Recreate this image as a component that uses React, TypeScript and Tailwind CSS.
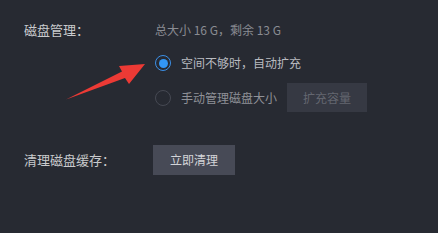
import React from "react";

function Radio({ checked }: { checked?: boolean }) {
  return checked ? (
    <span className="flex h-4 w-4 items-center justify-center rounded-full border-[1.5px] border-[#3b8fe6]">
      <span className="h-[9px] w-[9px] rounded-full bg-[#3296f5]" />
    </span>
  ) : (
    <span className="h-4 w-4 rounded-full border border-[#464953]" />
  );
}

export default function App() {
  return (
    <div
      className="relative h-[233px] w-[438px] overflow-hidden bg-[#272a32] pl-6 pt-[22px]"
      style={{ fontFamily: '"Noto Sans CJK SC", "Liberation Sans", sans-serif' }}
    >
      {/* 磁盘管理 */}
      <div className="flex">
        <div className="w-[131px] text-[13px] leading-4 text-[#c9cacd]">磁盘管理：</div>
        <div className="flex flex-col">
          <div className="h-4 text-[12px] leading-4 text-[#8a8c92]">总大小 16 G，剩余 13 G</div>
          <div className="mt-[10px] flex h-[30px] items-center">
            <Radio checked />
            <span className="ml-[10px] text-[12px] text-[#b9bbc0]">空间不够时，自动扩充</span>
          </div>
          <div className="mt-[5px] flex h-[29px] items-center">
            <Radio />
            <span className="ml-[10px] text-[12px] text-[#8f9197]">手动管理磁盘大小</span>
            <button className="ml-[10px] h-[29px] w-[80px] bg-[#363943] text-[12px] text-[#646770]">
              扩充容量
            </button>
          </div>
        </div>
      </div>

      {/* 清理磁盘缓存 */}
      <div className="mt-[33px] flex items-center">
        <div className="w-[129px] text-[13px] leading-4 text-[#c9cacd]">清理磁盘缓存：</div>
        <button className="h-[30px] w-[82px] bg-[#474a56] text-[12px] text-[#d3d4d8]">立即清理</button>
      </div>

      {/* 标注箭头 */}
      <svg className="absolute left-0 top-0" width="438" height="233" viewBox="0 0 438 233">
        <polygon
          points="66,99.5 122,71.5 119,66 145,64 129,84 125,78"
          fill="#ec3a35"
        />
      </svg>
    </div>
  );
}
